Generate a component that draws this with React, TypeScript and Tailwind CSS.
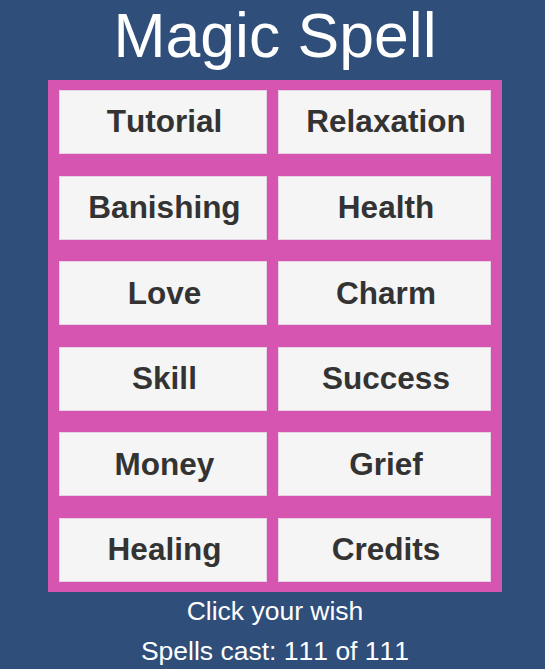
import React from 'react';

const spells = [
    'Tutorial', 'Relaxation',
    'Banishing', 'Health',
    'Love', 'Charm',
    'Skill', 'Success',
    'Money', 'Grief',
    'Healing', 'Credits',
];

const App = () => {
    return (
        <div className="min-h-[669px] w-full bg-[#2f4e7a] font-['Liberation_Sans'] [font-kerning:none]">
            <div className="ml-[48px] w-[454px] flex flex-col items-center">
                <h1 className="mb-[10px] text-[62.5px] leading-[70px] text-white font-normal">
                    Magic Spell
                </h1>

                <div className="w-full h-[512px] bg-[#d555b0] pt-[10px] pb-[10px] pl-[11px] pr-[11px] grid grid-cols-[208px_213px] grid-rows-6 gap-x-[11px] gap-y-[21.6px]">
                    {spells.map((s) => (
                        <button
                            key={s}
                            className="h-full bg-[#f5f5f5] border border-[#e9d2e4] pl-[3px] text-[#333333] text-[31.5px] font-bold font-['Liberation_Sans'] [font-kerning:none] flex items-center justify-center"
                        >
                            {s}
                        </button>
                    ))}
                </div>

                <p className="text-white text-[26.5px] leading-[40px] mt-[-1px]">Click your wish</p>
                <p className="text-white text-[26.5px] leading-[40px]">Spells cast: 111 of 111</p>
            </div>
        </div>
    );
};

export default App;
